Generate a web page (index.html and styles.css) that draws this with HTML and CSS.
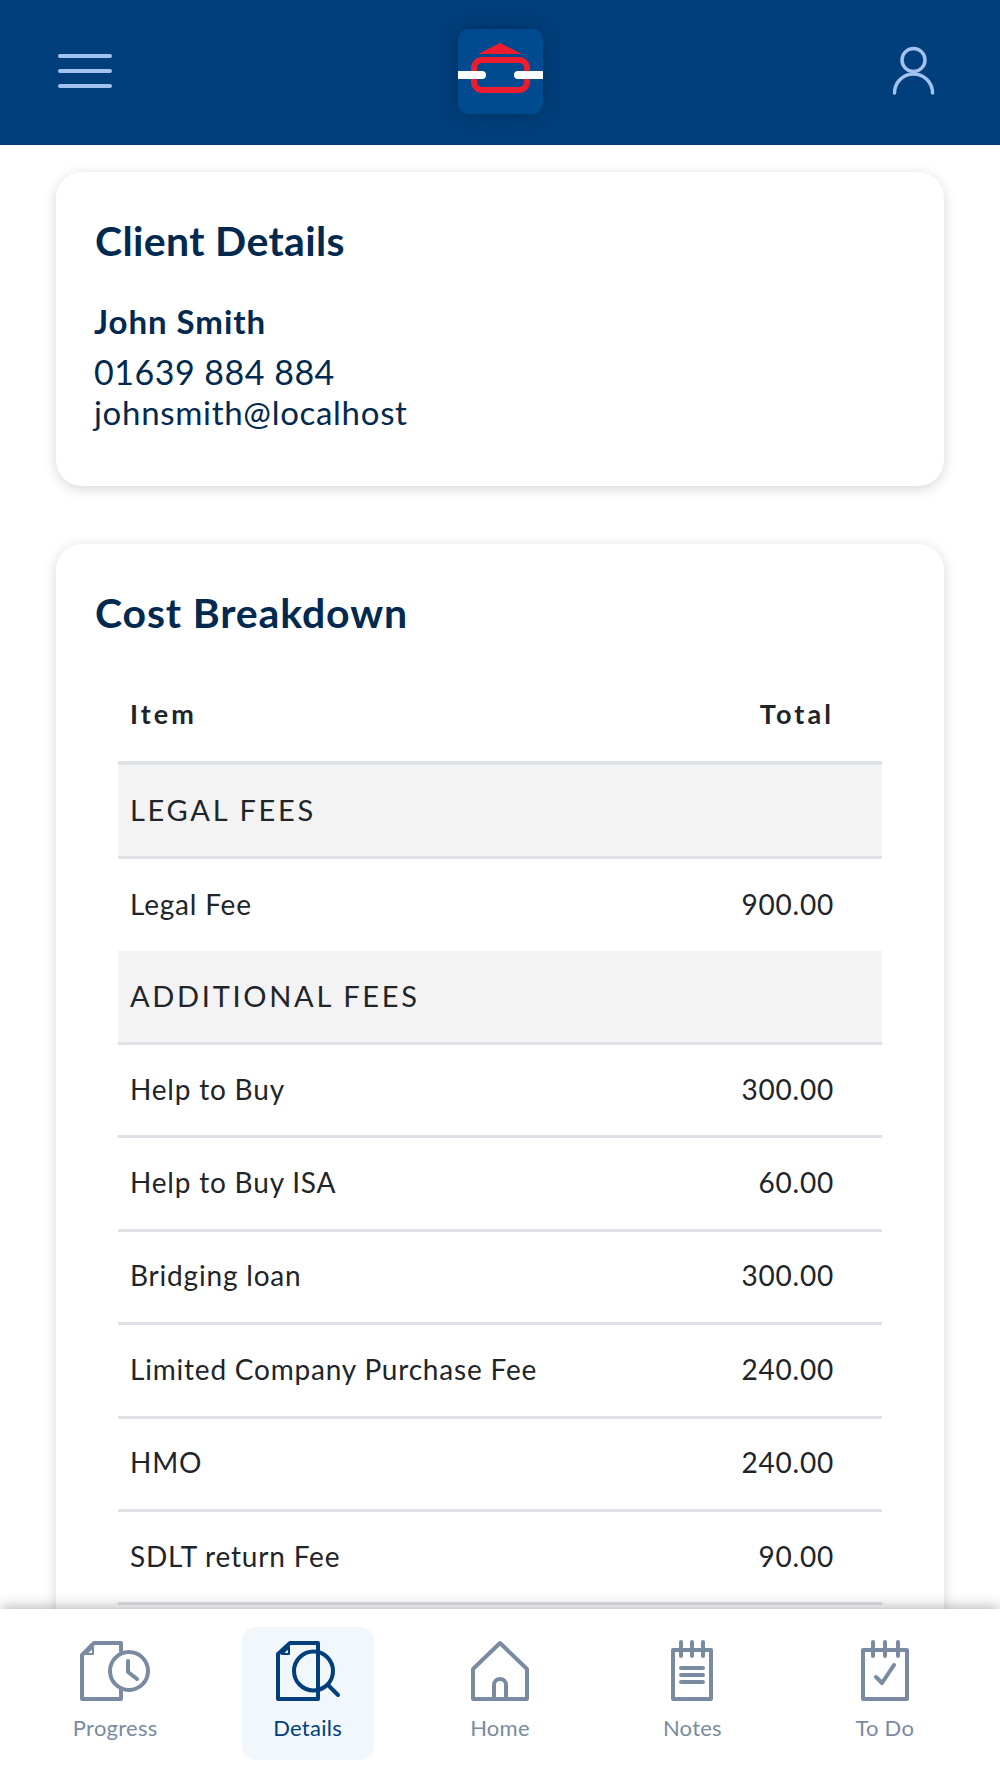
FILE: index.html
```html
<!DOCTYPE html>
<html lang="en">
<head>
<meta charset="utf-8">
<title>Client Details</title>
<link rel="stylesheet" href="styles.css">
</head>
<body>
<div class="app">
  <header class="topbar">
    <svg class="menu-icon" viewBox="0 0 54 36" aria-hidden="true">
      <path d="M2 3H52M2 18H52M2 33H52"/>
    </svg>
    <div class="logo">
      <svg viewBox="0 0 85 85" aria-hidden="true">
        <path class="logo-red-fill" d="M42 14L64 25H20Z"/>
        <rect class="logo-red-line" x="16" y="31" width="53" height="30" rx="8"/>
        <path class="logo-white" d="M0 42H24a4 4 0 0 1 0 8H0Z"/>
        <path class="logo-white" d="M85 42H60a4 4 0 0 0 0 8H85Z"/>
      </svg>
    </div>
    <svg class="user-icon" viewBox="0 0 49 50" aria-hidden="true">
      <circle cx="20.500" cy="14" r="11.500"/>
      <path d="M1.500 47A19 19 0 0 1 39.500 47"/>
    </svg>
  </header>

  <main class="content">
    <section class="card card-client">
      <h2 class="card-title">Client Details</h2>
      <p class="client-name">John Smith</p>
      <p class="client-phone">01639 884 884</p>
      <p class="client-email">johnsmith@localhost</p>
    </section>

    <section class="card card-cost">
      <h2 class="card-title">Cost Breakdown</h2>
      <table class="cost-table">
        <thead>
          <tr><th>Item</th><th class="num">Total</th></tr>
        </thead>
        <tbody>
          <tr class="group"><td colspan="2">LEGAL FEES</td></tr>
          <tr class="plain"><td>Legal Fee</td><td class="num">900.00</td></tr>
          <tr class="group"><td colspan="2">ADDITIONAL FEES</td></tr>
          <tr><td>Help to Buy</td><td class="num">300.00</td></tr>
          <tr><td>Help to Buy ISA</td><td class="num">60.00</td></tr>
          <tr><td>Bridging loan</td><td class="num">300.00</td></tr>
          <tr><td>Limited Company Purchase Fee</td><td class="num">240.00</td></tr>
          <tr><td>HMO</td><td class="num">240.00</td></tr>
          <tr><td>SDLT return Fee</td><td class="num">90.00</td></tr>
        </tbody>
      </table>
    </section>
  </main>

  <nav class="tabbar">
    <a class="tab">
      <svg class="tab-icon" viewBox="0 0 80 64" aria-hidden="true">
        <path d="M46 12V4H19L7 16V60H46V50"/>
        <path class="fold" d="M18 8V15H11Z"/>
        <circle cx="54" cy="32" r="19"/>
        <path d="M53 22V33L62 40"/>
      </svg>
      <span>Progress</span>
    </a>
    <a class="tab active">
      <svg class="tab-icon" viewBox="0 0 80 64" aria-hidden="true">
        <path d="M22 4H50V60H10V15Z"/>
        <path class="fold" d="M21 8V15H14Z"/>
        <circle cx="45.500" cy="32" r="19.500"/>
        <path d="M60 46L70 56"/>
      </svg>
      <span>Details</span>
    </a>
    <a class="tab">
      <svg class="tab-icon" viewBox="0 0 80 64" aria-hidden="true">
        <path d="M13 30L40 4L67 30V60H13Z"/>
        <path d="M34 60V46a6 6 0 0 1 12 0V60"/>
      </svg>
      <span>Home</span>
    </a>
    <a class="tab">
      <svg class="tab-icon" viewBox="0 0 80 64" aria-hidden="true">
        <path d="M21 11H59V60H21Z"/>
        <path d="M29 3V17M40 3V17M51 3V17M29 29H51M29 36H51M29 43H51"/>
      </svg>
      <span>Notes</span>
    </a>
    <a class="tab">
      <svg class="tab-icon" viewBox="0 0 80 64" aria-hidden="true">
        <path d="M18 11H62V60H18Z"/>
        <path d="M28 3V17M40 3V17M53 3V17M31 38L37 44L49 26"/>
      </svg>
      <span>To Do</span>
    </a>
  </nav>
</div>
</body>
</html>
```

FILE: styles.css
```css
* { box-sizing: border-box; }
html, body { margin: 0; padding: 0; }
body {
  font-family: "Lato", "Noto Sans", sans-serif;
  color: #212529;
  background: #fff;
}
.app {
  height: 1778px;
  display: flex;
  flex-direction: column;
  overflow: hidden;
}
.topbar {
  flex: 0 0 145px;
  background: #003f7c;
  display: grid;
  grid-template-columns: 1fr auto 1fr;
  align-items: center;
  padding: 0 58px;
  position: relative;
  z-index: 2;
}
.menu-icon {
  width: 54px;
  height: 36px;
  margin-top: -4px;
  fill: none;
  stroke: #a3c2f0;
  stroke-width: 4;
  stroke-linecap: round;
}
.user-icon {
  width: 49px;
  height: 50px;
  justify-self: end;
  margin-top: -3px;
  fill: none;
  stroke: #a3c2f0;
  stroke-width: 3.500;
  stroke-linecap: round;
}
.logo {
  width: 85px;
  height: 85px;
  margin-top: -3px;
  border-radius: 11px;
  background: #004a90;
  box-shadow: 0 0 22px rgba(0, 0, 0, .22);
  overflow: hidden;
}
.logo svg { display: block; width: 85px; height: 85px; }
.logo-red-fill { fill: #ed1c2e; }
.logo-red-line { fill: none; stroke: #ed1c2e; stroke-width: 6; }
.logo-white { fill: #fff; }

.content {
  flex: 1 1 0;
  min-height: 0;
  overflow: hidden;
  padding: 27px 56px 0;
  display: flex;
  flex-direction: column;
  gap: 58px;
}
.card {
  flex: none;
  background: #fff;
  border-radius: 26px;
  box-shadow: 0 3px 14px rgba(0, 0, 0, .16);
  padding: 44px 39px 0;
}
.card-client { height: 314px; }
.card-cost { height: 1100px; }
.card-title {
  margin: 0;
  font-size: 41px;
  line-height: 50px;
  font-weight: 700;
  color: #02294f;
}
.card-client .card-title { letter-spacing: .35px; }
.card-cost .card-title { letter-spacing: .85px; }
.client-name {
  margin: 35px 0 0 -1px;
  font-size: 33px;
  line-height: 40px;
  font-weight: 700;
  color: #02294f;
  letter-spacing: .95px;
}
.client-phone {
  margin: 9px 0 0 -1px;
  font-size: 34px;
  line-height: 44px;
  color: #02294f;
  letter-spacing: .5px;
}
.client-email {
  margin: -3px 0 0 -1px;
  font-size: 33px;
  line-height: 42px;
  color: #02294f;
  letter-spacing: .7px;
}
.cost-table {
  width: 764px;
  margin: 31px 0 0 23px;
  border-collapse: separate;
  border-spacing: 0;
  font-size: 28px;
  letter-spacing: .8px;
}
.cost-table th, .cost-table td {
  height: 93.400px;
  padding: 0 13px 3px 12px;
  text-align: left;
  font-weight: 400;
  border-bottom: 3px solid #dee2e6;
}
.cost-table th {
  height: 96px;
  font-size: 27px;
  font-weight: 700;
  letter-spacing: 3.100px;
  border-bottom-width: 4px;
}
.cost-table .num { text-align: right; padding-right: 48px; }
.cost-table .group td {
  height: 94px;
  background: #f3f3f4;
  font-size: 29px;
  letter-spacing: 2.700px;
  font-weight: 400;
  padding-bottom: 3px;
}
.cost-table .plain td { height: 92px; border-bottom: 0; }

.tabbar {
  flex: 0 0 169px;
  background: #fff;
  display: grid;
  grid-template-columns: repeat(5, 1fr);
  padding: 18px 19px 18px;
  box-shadow: 0 -3px 12px rgba(0, 0, 0, .25);
  position: relative;
  z-index: 3;
}
.tab {
  width: 132px;
  justify-self: center;
  border-radius: 14px;
  display: flex;
  flex-direction: column;
  align-items: center;
  padding-top: 12px;
  color: #7a8ba1;
  font-size: 22px;
  line-height: 30px;
  letter-spacing: .25px;
}
.tab.active {
  background: #f2f7fc;
  color: #003f7c;
}
.tab-icon {
  width: 80px;
  height: 64px;
  margin-bottom: 10px;
  fill: none;
  stroke: currentColor;
  stroke-width: 4;
  stroke-linejoin: round;
  stroke-linecap: round;
}
.fold { stroke-width: 2; fill: none; }
```
